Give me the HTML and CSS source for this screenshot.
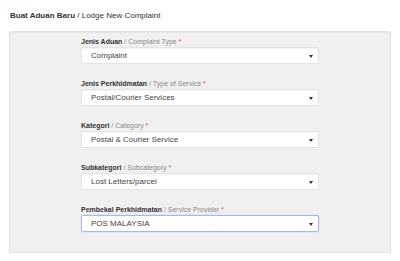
FILE: index.html
```html
<!DOCTYPE html>
<html>
<head>
<meta charset="utf-8">
<link rel="stylesheet" href="styles.css">
</head>
<body>
<div class="page">
  <h1 class="title"><b>Buat Aduan Baru</b> / Lodge New Complaint</h1>
  <div class="well">
    <form class="form">
      <div class="group">
        <label class="lbl"><b>Jenis Aduan</b> / Complaint Type <span class="req">*</span></label>
        <div class="sel"><span>Complaint</span><span class="arr"></span></div>
      </div>
      <div class="group">
        <label class="lbl"><b>Jenis Perkhidmatan</b> / Type of Service <span class="req">*</span></label>
        <div class="sel"><span>Postal/Courier Services</span><span class="arr"></span></div>
      </div>
      <div class="group">
        <label class="lbl"><b>Kategori</b> / Category <span class="req">*</span></label>
        <div class="sel"><span>Postal &amp; Courier Service</span><span class="arr"></span></div>
      </div>
      <div class="group">
        <label class="lbl"><b>Subkategori</b> / Subcategory <span class="req">*</span></label>
        <div class="sel"><span>Lost Letters/parcel</span><span class="arr"></span></div>
      </div>
      <div class="group">
        <label class="lbl"><b>Pembekal Perkhidmatan</b> / Service Provider <span class="req">*</span></label>
        <div class="sel focus"><span>POS MALAYSIA</span><span class="arr"></span></div>
      </div>
    </form>
  </div>
</div>
</body>
</html>
```
FILE: styles.css
```css
* { box-sizing: border-box; }
html, body { margin: 0; padding: 0; background: #fff; }
body { font-family: "Liberation Sans", Arial, sans-serif; color: #333; }
.page { padding: 10px 10px 0 9px; }
.title {
  margin: 0 0 0 1px;
  font-size: 8px;
  line-height: 11px;
  font-weight: normal;
  color: #333;
  height: 21px;
}
.title b { font-weight: bold; }
.well {
  width: 382px;
  height: 222px;
  background: #f0f0f0;
  border: 1px solid #e1e1e1;
  border-radius: 2px;
  box-shadow: inset 0 1px 1px rgba(0,0,0,.04), 0 1px 0 #e8e8e8;
  padding: 4px 0 4px 71px;
}
.form { width: 238px; margin: 0; }
.group { margin-bottom: 14px; }
.lbl {
  display: block;
  font-size: 7px;
  line-height: 11px;
  height: 11px;
  color: #8a8a8a;
}
.lbl b { color: #333; font-weight: bold; }
.req { color: #e05050; }
.sel {
  height: 17px;
  background: #fff;
  border: 1px solid #e4e4e4;
  border-radius: 2px;
  box-shadow: inset 0 1px 1px rgba(0,0,0,.05);
  display: flex;
  align-items: center;
  justify-content: space-between;
  padding: 0 5px 0 9px;
  font-size: 8px;
  color: #444;
}
.sel.focus {
  border-color: #a8b8e4;
  box-shadow: 0 0 2px rgba(102,140,230,.3);
}
.arr {
  width: 0; height: 0;
  border-left: 2px solid transparent;
  border-right: 2px solid transparent;
  border-top: 3px solid #333;
  margin-top: 1px;
}
```
